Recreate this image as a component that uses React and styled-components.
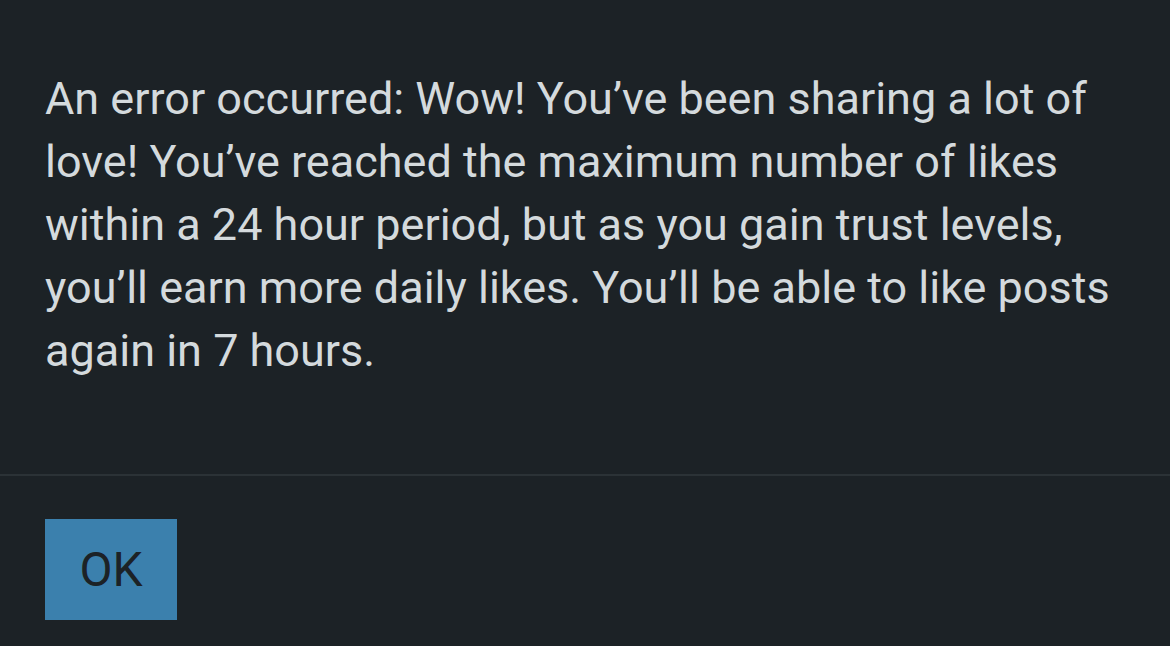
import React from "react";
import styled, { createGlobalStyle } from "styled-components";

const Global = createGlobalStyle`
  html, body { margin: 0; padding: 0; background: #1c2226; }
  body { font-family: Roboto, "Noto Sans", sans-serif; }
`;

const Dialog = styled.div`
  width: 1170px;
  height: 646px;
  background: #1c2226;
  display: flex;
  flex-direction: column;
  overflow: hidden;
`;

const Body = styled.div`
  padding: 67px 45px 92px 45px;
  color: #d4dadd;
  font-size: 45px;
  line-height: 63px;
`;

const Message = styled.p`
  margin: 0;
`;

const Footer = styled.div`
  border-top: 2px solid #2b3236;
  padding: 43px 45px 0 45px;
  display: flex;
`;

const Button = styled.button`
  height: 101px;
  width: 132px;
  padding: 0;
  border: none;
  border-radius: 0;
  background: #3b80ad;
  color: #1c2226;
  font-family: Roboto, "Noto Sans", sans-serif;
  font-size: 48px;
  cursor: pointer;
`;

export default function App() {
  return (
    <>
      <Global />
      <Dialog>
        <Body>
          <Message>
            An error occurred: Wow! You’ve been sharing a lot of love! You’ve
            reached the maximum number of likes within a 24 hour period, but as
            you gain trust levels, you’ll earn more daily likes. You’ll be able
            to like posts again in 7 hours.
          </Message>
        </Body>
        <Footer>
          <Button>OK</Button>
        </Footer>
      </Dialog>
    </>
  );
}
